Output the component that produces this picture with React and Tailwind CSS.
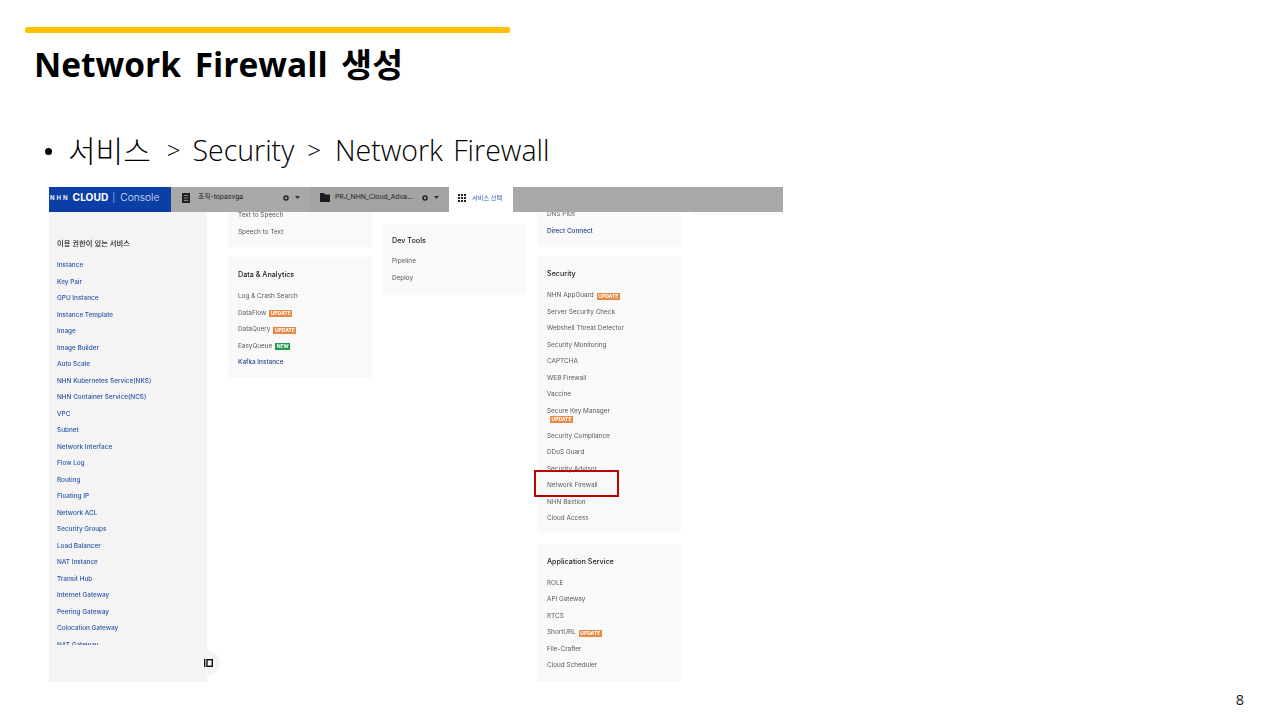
const cjk = "font-['Open_Sans','Noto_Sans_CJK_KR',sans-serif]";

const sidebarItems = ["Instance","Key Pair","GPU Instance","Instance Template","Image","Image Builder","Auto Scale","NHN Kubernetes Service(NKS)","NHN Container Service(NCS)","VPC","Subnet","Network Interface","Flow Log","Routing","Floating IP","Network ACL","Security Groups","Load Balancer","NAT Instance","Transit Hub","Internet Gateway","Peering Gateway","Colocation Gateway","NAT Gateway"];

function Badge({ label = "UPDATE" }) {
  const isNew = label === "NEW";
  return (
    <span className={`inline-flex items-center justify-center h-[7px] text-[5px] leading-none font-bold text-white ${isNew ? "w-[15px] bg-[#1c9a52]" : "w-[23px] bg-[#e68a45]"}`}>
      {label}
    </span>
  );
}

function Item({ children, badge, link, side }) {
  const color = side ? "text-[#2a56a8] font-medium" : link ? "text-[#23468f] font-medium" : "text-[#5a5a5a]";
  return (
    <div className={`h-[16.5px] flex items-center gap-[3px] whitespace-nowrap ${color}`}>
      <span>{children}</span>
      {badge && <Badge label={badge} />}
    </div>
  );
}

function Heading({ children }) {
  return <div className="h-[16px] flex items-center text-[7.2px] font-medium text-[#222]">{children}</div>;
}

function Card({ className = "", children }) {
  return <div className={`bg-[#f9f9f9] pl-[10px] rounded-[2px] ${className}`}>{children}</div>;
}

function Gear() {
  return (
    <span className="flex items-center gap-[6px]">
      <svg width="6" height="6" viewBox="0 0 6 6"><circle cx="3" cy="3" r="2" fill="none" stroke="#222" strokeWidth="1.5" /></svg>
      <svg width="5" height="3" viewBox="0 0 5 3"><path d="M0 0h5L2.5 3z" fill="#333" /></svg>
    </span>
  );
}

export default function App() {
  return (
    <div className={`w-[1280px] h-[720px] bg-white flex flex-col overflow-hidden ${cjk}`}>
      <div className="mt-[27px] ml-[25px] w-[485px] h-[6px] rounded-[2px] bg-[#ffc000]" />
      <h1 className="ml-[34px] mt-[6px] h-[50px] flex items-center text-[33.5px] font-bold text-black [word-spacing:5px]">Network Firewall 생성</h1>
      <div className="ml-[45px] mt-[36px] h-[50px] flex items-center text-[28.5px] text-black">
        <span className="w-[23px] flex"><span className="w-[7px] h-[7px] rounded-full bg-black mt-[2px]" /></span>
        <span className="font-light [word-spacing:3px] flex items-center">
          <span className="text-[30px]">서비스</span>
          <span className="ml-[16px] text-[24px]">&gt;</span>
          <span className="ml-[12px]">Security</span>
          <span className="ml-[13px] text-[24px]">&gt;</span>
          <span className="ml-[14px]">Network Firewall</span>
        </span>
      </div>

      <div className="relative ml-[49px] mt-[12px] w-[734px] h-[495px] flex flex-col font-['Inter','Noto_Sans_CJK_KR',sans-serif] text-[6.4px] blur-[0.45px]">
        <div className="h-[25px] flex shrink-0 text-[6.8px]">
          <div className="w-[122px] bg-[#0b3fa6] flex items-center pb-[4px] text-white">
            <span className="ml-[1px] text-[6px] font-semibold tracking-[2px]">NHN</span>
            <span className="ml-[3px] text-[10.2px] font-bold">CLOUD</span>
            <span className="ml-[4px] text-[9px] text-[#9db4e0]">|</span>
            <span className="ml-[5px] text-[10.2px] font-light text-[#dbe4f5]">Console</span>
          </div>
          <div className="w-[139px] bg-[#a8a8a8] flex items-center pb-[4px] text-[#222]">
            <svg className="ml-[11px]" width="8" height="10" viewBox="0 0 8 10"><rect width="8" height="10" fill="#222" /><path d="M2 2.5h4M2 5h4M2 7.5h4" stroke="#999" strokeWidth="0.8" /></svg>
            <span className="ml-[8px] w-[85px]">조직-topasvga</span>
            <Gear />
          </div>
          <div className="w-[139px] bg-[#a3a3a3] flex items-center pb-[4px] text-[#222]">
            <svg className="ml-[10px]" width="10" height="9" viewBox="0 0 10 9"><path d="M0 0h4l1 1.5h5V9H0z" fill="#1c1c1c" /></svg>
            <span className="ml-[5px] w-[87px] whitespace-nowrap">PRJ_NHN_Cloud_Adva...</span>
            <Gear />
          </div>
          <div className="w-[64px] bg-white flex items-center pb-[4px] text-[#2a5fb8]">
            <svg className="ml-[9px]" width="8" height="8" viewBox="0 0 8 8" fill="#222">
              <rect width="2" height="2" /><rect x="3" width="2" height="2" /><rect x="6" width="2" height="2" />
              <rect y="3" width="2" height="2" /><rect x="3" y="3" width="2" height="2" /><rect x="6" y="3" width="2" height="2" />
              <rect y="6" width="2" height="2" /><rect x="3" y="6" width="2" height="2" /><rect x="6" y="6" width="2" height="2" />
            </svg>
            <span className="ml-[6px] text-[6.2px]">서비스 선택</span>
          </div>
          <div className="flex-1 bg-[#a8a8a8]" />
        </div>

        <div className="h-[470px] flex overflow-hidden">
          <aside className="w-[158px] shrink-0 bg-[#f4f4f4] pl-[8px] pt-[24px]">
            <div className="h-[16px] flex items-center text-[7.3px] font-medium text-[#222]">이용 권한이 있는 서비스</div>
            <div className="mt-[6px] h-[387px] overflow-hidden">
              {sidebarItems.map((s) => <Item key={s} side>{s}</Item>)}
            </div>
          </aside>

          <div className="ml-[21px] w-[144px] shrink-0 flex flex-col gap-[10px] -mt-[4px]">
            <Card className="pb-[6px]">
              <Item>Text to Speech</Item>
              <Item>Speech to Text</Item>
            </Card>
            <Card className="pt-[10px] pb-[6px]">
              <Heading>Data &amp; Analytics</Heading>
              <div className="mt-[6px]">
                <Item>Log &amp; Crash Search</Item>
                <Item badge="UPDATE">DataFlow</Item>
                <Item badge="UPDATE">DataQuery</Item>
                <Item badge="NEW">EasyQueue</Item>
                <Item link>Kafka Instance</Item>
              </div>
            </Card>
          </div>

          <div className="ml-[10px] w-[144px] shrink-0 mt-[12px]">
            <Card className="pt-[9px] pb-[8px]">
              <Heading>Dev Tools</Heading>
              <div className="mt-[5px]">
                <Item>Pipeline</Item>
                <Item>Deploy</Item>
              </div>
            </Card>
          </div>

          <div className="ml-[11px] w-[144px] shrink-0 flex flex-col -mt-[5px]">
            <Card className="pb-[7px]">
              <Item>DNS Plus</Item>
              <Item link>Direct Connect</Item>
            </Card>
            <Card className="mt-[9px] pt-[10px] pb-[5px]">
              <Heading>Security</Heading>
              <div className="mt-[6px]">
                <Item badge="UPDATE">NHN AppGuard</Item>
                <Item>Server Security Check</Item>
                <Item>Webshell Threat Detector</Item>
                <Item>Security Monitoring</Item>
                <Item>CAPTCHA</Item>
                <Item>WEB Firewall</Item>
                <Item>Vaccine</Item>
                <div className="h-[25px] text-[#5a5a5a] pt-[3px] leading-[9px]">
                  <div>Secure Key Manager</div>
                  <div className="ml-[3px] flex"><Badge /></div>
                </div>
                <Item>Security Compliance</Item>
                <Item>DDoS Guard</Item>
                <Item>Security Advisor</Item>
                <Item>Network Firewall</Item>
                <Item>NHN Bastion</Item>
                <Item>Cloud Access</Item>
              </div>
            </Card>
            <Card className="mt-[11px] pt-[11px] pb-[7px]">
              <Heading>Application Service</Heading>
              <div className="mt-[5px]">
                <Item>ROLE</Item>
                <Item>API Gateway</Item>
                <Item>RTCS</Item>
                <Item badge="UPDATE">ShortURL</Item>
                <Item>File-Crafter</Item>
                <Item>Cloud Scheduler</Item>
              </div>
            </Card>
          </div>

          <div className="ml-[11px] flex-1 h-[3px] bg-[#f9f9f9]" />
        </div>

        <div className="absolute left-[485px] top-[283px] w-[85px] h-[27px] border-2 border-[#c00000]" />
        <div className="absolute left-[147px] top-[464px] w-[24px] h-[24px] rounded-full bg-[#f4f4f4] flex items-center justify-center">
          <svg width="9" height="8" viewBox="0 0 9 8"><path d="M0.7 0v8" stroke="#111" strokeWidth="1.4" /><rect x="3" y="0.7" width="5.3" height="6.6" fill="none" stroke="#111" strokeWidth="1.4" /></svg>
        </div>
      </div>

      <div className="mt-[8px] mr-[36px] text-right text-[14.5px] leading-[20px] text-[#222]">8</div>
    </div>
  );
}
